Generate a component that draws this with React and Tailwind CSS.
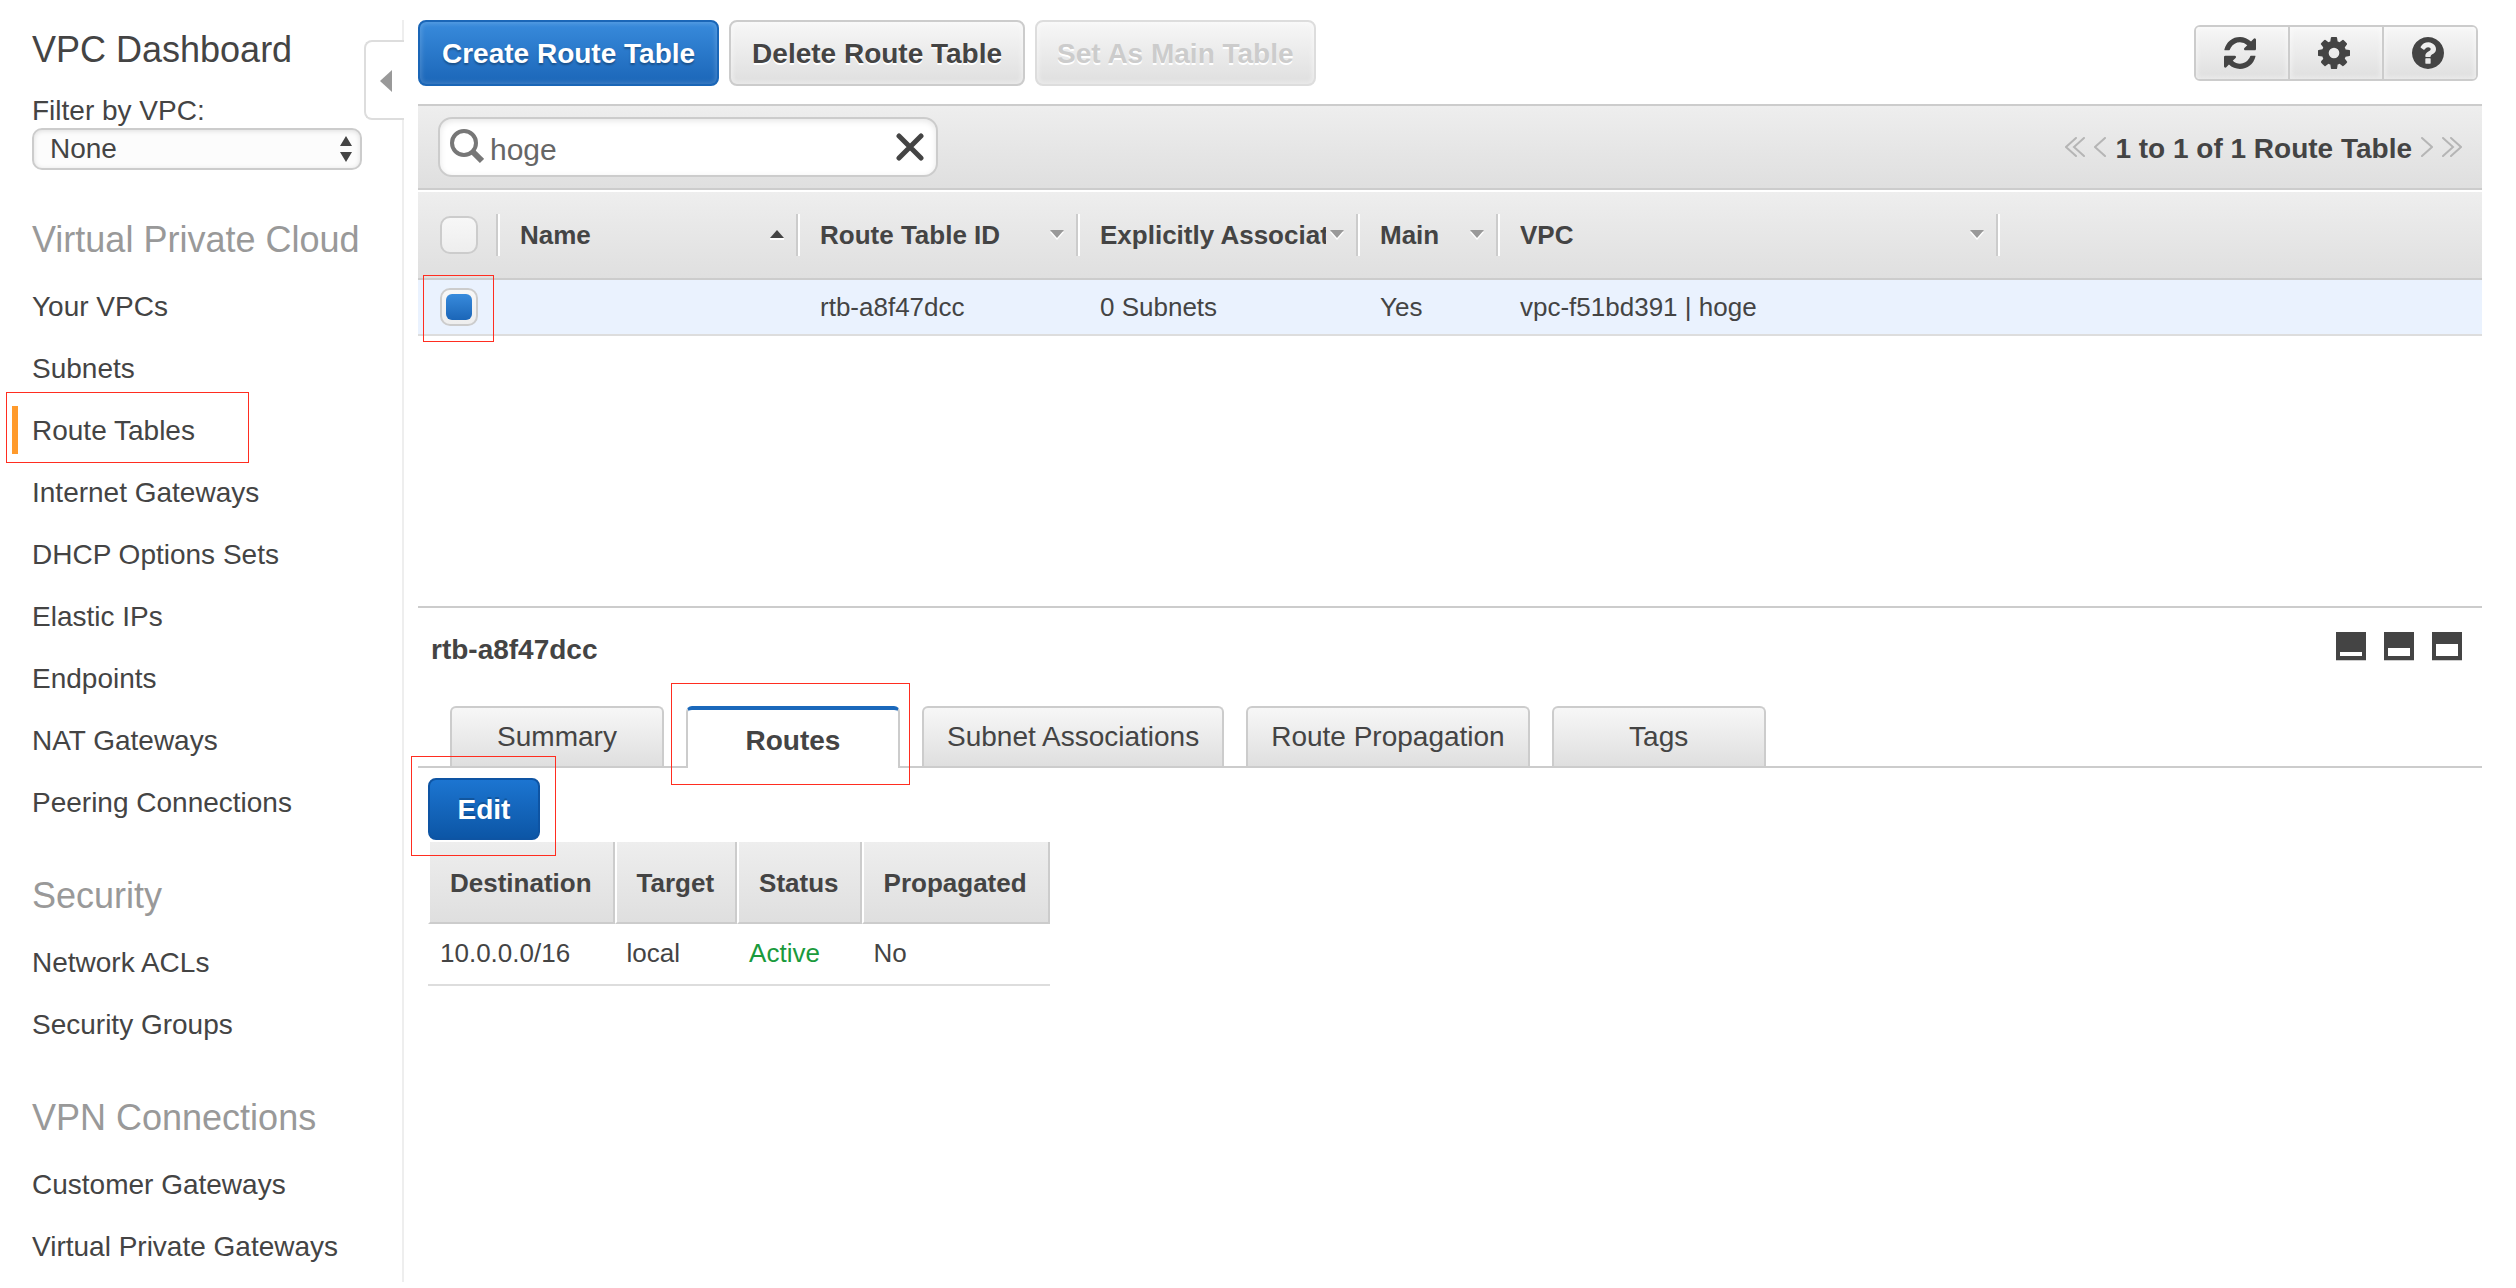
import React from 'react'

const NAV_SECTIONS = [
  {
    title: 'Virtual Private Cloud',
    items: [
      'Your VPCs',
      'Subnets',
      'Route Tables',
      'Internet Gateways',
      'DHCP Options Sets',
      'Elastic IPs',
      'Endpoints',
      'NAT Gateways',
      'Peering Connections'
    ]
  },
  { title: 'Security', items: ['Network ACLs', 'Security Groups'] },
  { title: 'VPN Connections', items: ['Customer Gateways', 'Virtual Private Gateways'] }
]

const COLUMNS = [
  { label: 'Name', width: 'w-[300px]', sort: 'up' },
  { label: 'Route Table ID', width: 'w-[280px]', sort: 'down' },
  { label: 'Explicitly Associat', width: 'w-[280px]', sort: 'down' },
  { label: 'Main', width: 'w-[140px]', sort: 'down' },
  { label: 'VPC', width: 'w-[500px]', sort: 'down' }
]

const ROUTE_TABLES = [['', 'rtb-a8f47dcc', '0 Subnets', 'Yes', 'vpc-f51bd391 | hoge']]

const TABS = ['Summary', 'Routes', 'Subnet Associations', 'Route Propagation', 'Tags']

const ROUTE_COLUMNS = ['Destination', 'Target', 'Status', 'Propagated']

// Shared looks
const BAR = 'bg-linear-to-b from-[#eeeeee] to-[#dfdfdf]'
const BUTTON = 'h-[66px] rounded-lg border-2 pt-0.5 text-[28px] leading-8 font-bold whitespace-nowrap'
const GREY_BUTTON = 'bg-linear-to-b from-[#f7f7f7] to-[#dfdfdf] [text-shadow:0_2px_0_#fff] shadow-[inset_0_0_4px_2px_rgba(255,255,255,0.4)]'
const ICON_BUTTON = 'flex items-center justify-center pr-1'
const HIGHLIGHT = 'pointer-events-none absolute z-10 border border-[#ff2d20]'

function RefreshIcon() {
  return (
    <svg viewBox="0 0 1536 1536" className="size-8 fill-current" aria-hidden="true">
      <path d="M1511 928q0 5-1 7-64 268-268 434.5t-478 166.5q-146 0-282.5-55t-243.5-157l-129 129q-19 19-45 19t-45-19-19-45v-448q0-26 19-45t45-19h448q26 0 45 19t19 45-19 45l-137 137q71 66 161 102t187 36q134 0 250-65t186-179q11-17 53-117 8-23 30-23h192q13 0 22.5 9.5t9.5 22.5zm25-800v448q0 26-19 45t-45 19h-448q-26 0-45-19t-19-45 19-45l138-138q-148-137-349-137-134 0-250 65t-186 179q-11 17-53 117-8 23-30 23h-199q-13 0-22.5-9.5t-9.5-22.5v-7q65-268 270-434.5t480-166.5q146 0 284 55.5t245 156.5l130-129q19-19 45-19t45 19 19 45z" />
    </svg>
  )
}

function CogIcon() {
  return (
    <svg viewBox="0 0 1536 1536" className="size-8 fill-current" aria-hidden="true">
      <path d="M1024 768q0-106-75-181t-181-75-181 75-75 181 75 181 181 75 181-75 75-181zm512-109v222q0 12-8 23t-20 13l-185 28q-19 54-39 91 35 50 107 138 10 12 10 25t-9 23q-27 37-99 108t-94 71q-12 0-26-9l-138-108q-44 23-91 38-16 136-29 186-7 28-36 28h-222q-14 0-24.5-8.5t-11.5-21.5l-28-184q-49-16-90-37l-141 107q-10 9-25 9-14 0-25-11-126-114-165-168-7-10-7-23 0-12 8-23 15-21 51-66.5t54-70.5q-27-50-41-99l-183-27q-13-2-21-12.5t-8-23.5v-222q0-12 8-23t19-13l186-28q14-46 39-92-40-57-107-138-10-12-10-24 0-10 9-23 26-36 98.5-107.5t94.5-71.5q13 0 26 10l138 107q44-23 91-38 16-136 29-186 7-28 36-28h222q14 0 24.5 8.5t11.5 21.5l28 184q49 16 90 37l142-107q9-9 24-9 13 0 25 10 129 119 165 170 7 8 7 22 0 12-8 23-15 21-51 66.5t-54 70.5q26 50 41 98l183 28q13 2 21 12.5t8 23.5z" />
    </svg>
  )
}

function HelpIcon() {
  return (
    <svg viewBox="0 0 1536 1536" className="size-8 fill-current" aria-hidden="true">
      <path d="M896 1248v-192q0-14-9-23t-23-9h-192q-14 0-23 9t-9 23v192q0 14 9 23t23 9h192q14 0 23-9t9-23zm256-672q0-88-55.5-163t-138.5-116-170-41q-243 0-371 213-15 24 8 42l132 100q7 6 19 6 16 0 25-12 53-68 86-92 34-24 86-24 48 0 85.5 26t37.5 59q0 38-20 61t-68 45q-63 28-115.5 86.5t-52.5 125.5v36q0 14 9 23t23 9h192q14 0 23-9t9-23q0-19 21.5-49.5t54.5-49.5q32-18 49-28.5t46-35 44.5-48 28-60.5 12.5-81zm384 192q0 209-103 385.5t-279.5 279.5-385.5 103-385.5-103-279.5-279.5-103-385.5 103-385.5 279.5-279.5 385.5-103 385.5 103 279.5 279.5 103 385.5z" />
    </svg>
  )
}

function SortArrow({ direction }) {
  if (direction === 'up') {
    return (
      <svg viewBox="0 0 14 10" className="h-[10px] w-[14px] shrink-0" aria-hidden="true">
        <path d="M0 8h14v2H0z" fill="#fff" />
        <path d="M7 0l7 8H0z" fill="#444" />
      </svg>
    )
  }
  return (
    <svg viewBox="0 0 14 10" className="h-[10px] w-[14px] shrink-0" aria-hidden="true">
      <path d="M0 2h14l-7 8z" fill="#fff" />
      <path d="M0 0h14l-7 8z" fill="#999" />
    </svg>
  )
}

function Separator() {
  return <span className="h-[42px] w-1 shrink-0 border-l-2 border-[#ccc] bg-white" />
}

function Checkbox({ label, defaultChecked }) {
  return (
    <input
      type="checkbox"
      aria-label={label}
      defaultChecked={defaultChecked}
      className="grid size-[38px] appearance-none place-items-center rounded-[10px] border-2 border-[#ccc] bg-linear-to-b from-[#f7f7f7] to-[#eeeeee] checked:before:size-[26px] checked:before:rounded-md checked:before:bg-linear-to-b checked:before:from-[#388bdc] checked:before:to-[#1b66b8] checked:before:content-['']"
    />
  )
}

function PagerButton({ label, double, flip }) {
  return (
    <button type="button" aria-label={label} className={flip ? 'rotate-180' : ''}>
      <svg
        viewBox={double ? '0 0 20 20' : '0 0 12 20'}
        className={double ? 'h-5 w-5' : 'h-5 w-3'}
        fill="none"
        stroke="#b5b5b5"
        strokeWidth="2"
        strokeLinecap="round"
        aria-hidden="true"
      >
        <path d="M11 1L1 10l10 9" />
        {double && <path d="M19 1L9 10l10 9" />}
      </svg>
    </button>
  )
}

// Panel size switch: the white slot grows with the detail pane
function PaneButton({ label, y, height }) {
  return (
    <button type="button" aria-label={label}>
      <svg viewBox="0 0 30 29" className="h-[29px] w-[30px]" aria-hidden="true">
        <path d="M0 27h30v2H0z" fill="#ccc" />
        <path d="M0 0h30v28H0z" fill="#444" />
        <rect x="4" y={y} width="22" height={height} fill="#fff" />
      </svg>
    </button>
  )
}

function Sidebar() {
  return (
    <aside className="relative w-[404px] shrink-0 pt-5 pb-[6px]">
      <div className="min-h-[1262px] border-r-2 border-[#eee] pt-[10px] pr-10 pl-8">
        <h1 className="mb-6 text-4xl leading-10">VPC Dashboard</h1>
        <label htmlFor="vpc-filter" className="block text-[28px] leading-[34px]">
          Filter by VPC:
        </label>
        <div className="relative">
          <select
            id="vpc-filter"
            className="block h-[42px] w-full appearance-none rounded-[10px] border-2 border-[#ccc] bg-[#fcfcfc] pl-4 text-[28px] leading-9 shadow-[inset_0_1px_5px_rgba(0,0,0,0.12)]"
          >
            <option>None</option>
          </select>
          <svg viewBox="0 0 12 26" className="pointer-events-none absolute top-2 right-[10px] h-[26px] w-3 fill-[#444]" aria-hidden="true">
            <path d="M6 0l6 10H0zM6 26l6-10H0z" />
          </svg>
        </div>
        <nav className="mt-10 flex flex-col gap-8">
          {NAV_SECTIONS.map((section) => (
            <section key={section.title}>
              <h2 className="mb-[6px] text-4xl leading-[60px] whitespace-nowrap text-[#999]">{section.title}</h2>
              <ul>
                {section.items.map((item) => (
                  <li key={item} className="relative text-[28px] leading-[62px] whitespace-nowrap">
                    {item === 'Route Tables' && (
                      <>
                        <span className="absolute top-[6px] -left-5 h-12 w-[6px] bg-[#ff9a2b]" />
                        <span className={`${HIGHLIGHT} -top-2 -left-[26px] h-[71px] w-[243px]`} />
                      </>
                    )}
                    <a href="#">{item}</a>
                  </li>
                ))}
              </ul>
            </section>
          ))}
        </nav>
      </div>
      <button
        type="button"
        aria-label="Collapse navigation"
        className="absolute top-10 right-0 flex h-20 w-10 items-center rounded-l-lg border-2 border-r-0 border-[#ddd] bg-white pt-0.5 pl-[14px]"
      >
        <svg viewBox="0 0 12 22" className="h-[22px] w-3 fill-[#999]" aria-hidden="true">
          <path d="M12 0v22L0 11z" />
        </svg>
      </button>
    </aside>
  )
}

function Toolbar() {
  return (
    <div className="mb-[18px] flex items-center justify-between pr-1">
      <div className="flex gap-[10px]">
        <button
          type="button"
          className={`${BUTTON} border-[#1a66b7] bg-linear-to-b from-[#388bdc] to-[#1b66b8] px-[22px] text-white shadow-[inset_0_0_4px_2px_rgba(255,255,255,0.15)] [text-shadow:0_2px_2px_rgba(0,0,0,0.3)]`}
        >
          Create Route Table
        </button>
        <button type="button" className={`${BUTTON} ${GREY_BUTTON} border-[#ccc] px-[21px]`}>
          Delete Route Table
        </button>
        <button type="button" disabled className={`${BUTTON} ${GREY_BUTTON} border-[#ddd] px-5 text-[#ccc]`}>
          Set As Main Table
        </button>
      </div>
      <div className="flex h-14 divide-x-2 divide-[#ccc] overflow-hidden rounded-md border-2 border-[#ccc]">
        <button type="button" aria-label="Refresh" className={`${GREY_BUTTON} ${ICON_BUTTON} w-[94px]`}>
          <RefreshIcon />
        </button>
        <button type="button" aria-label="Settings" className={`${GREY_BUTTON} ${ICON_BUTTON} w-[94px]`}>
          <CogIcon />
        </button>
        <button type="button" aria-label="Help" className={`${GREY_BUTTON} ${ICON_BUTTON} w-[92px]`}>
          <HelpIcon />
        </button>
      </div>
    </div>
  )
}

function FilterBar() {
  return (
    <div className={`${BAR} flex h-[86px] items-center justify-between border-y-2 border-[#ccc] px-5`}>
      <div className="flex h-15 w-[500px] items-center rounded-[14px] border-2 border-[#ccc] bg-white pr-3 pl-[10px] shadow-[inset_0_2px_6px_rgba(0,0,0,0.1)]">
        <svg viewBox="0 0 34 36" className="h-9 w-[34px] shrink-0" fill="none" stroke="#777" aria-hidden="true">
          <circle cx="14" cy="14" r="12" strokeWidth="4" />
          <path d="M22 22l10 10" strokeWidth="6" />
        </svg>
        <input
          type="text"
          aria-label="Search route tables"
          defaultValue="hoge"
          className="min-w-0 flex-1 bg-transparent pt-[6px] pl-[6px] text-3xl leading-9 text-[#666] outline-none"
        />
        <button type="button" aria-label="Clear search">
          <svg viewBox="0 0 28 28" className="size-7" stroke="#444" strokeWidth="5" strokeLinecap="round" aria-hidden="true">
            <path d="M3 3l22 22M25 3L3 25" />
          </svg>
        </button>
      </div>
      <div className="flex items-center gap-[9px]">
        <PagerButton label="First page" double />
        <PagerButton label="Previous page" />
        <span className="pt-[3px] text-[28px] leading-9 font-bold">1 to 1 of 1 Route Table</span>
        <PagerButton label="Next page" flip />
        <PagerButton label="Last page" double flip />
      </div>
    </div>
  )
}

function RouteTableList() {
  return (
    <div className="min-h-[416px] border-t-2 border-white">
      <table className="w-full table-fixed border-separate border-spacing-0 text-left text-[26px] leading-[30px]">
        <thead>
          <tr className={BAR}>
            <th className="w-[82px] border-b-2 border-[#ccc] p-0">
              <div className="flex h-[86px] items-center justify-between pl-[22px]">
                <Checkbox label="Select all" />
                <Separator />
              </div>
            </th>
            {COLUMNS.map((col) => (
              <th key={col.label} className={`${col.width} border-b-2 border-[#ccc] p-0`}>
                <div className="flex h-[86px] items-center pl-5">
                  <span className="mr-1 min-w-0 flex-1 overflow-hidden whitespace-nowrap">{col.label}</span>
                  <SortArrow direction={col.sort} />
                  <span className="w-3 shrink-0" />
                  <Separator />
                </div>
              </th>
            ))}
            <td className="border-b-2 border-[#ccc] p-0" />
          </tr>
        </thead>
        <tbody>
          {ROUTE_TABLES.map((row) => (
            <tr key={row[1]} className="bg-[#eaf2fe]">
              <td className="h-14 border-b-2 border-[#ddd] p-0">
                <div className="relative pl-[22px]">
                  <Checkbox label={`Select ${row[1]}`} defaultChecked />
                  <span className={`${HIGHLIGHT} -top-[13px] left-[5px] h-[67px] w-[71px]`} />
                </div>
              </td>
              {row.map((cell, i) => (
                <td key={i} className="border-b-2 border-[#ddd] p-0 pl-5">
                  {cell}
                </td>
              ))}
              <td className="border-b-2 border-[#ddd] p-0" />
            </tr>
          ))}
        </tbody>
      </table>
    </div>
  )
}

function Tabs() {
  return (
    <div role="tablist" className="flex items-end gap-[22px] border-b-2 border-[#ccc] pl-8">
      {TABS.map((tab) =>
        tab === 'Routes' ? (
          <div key={tab} className="relative -mb-[2px]">
            <button
              type="button"
              role="tab"
              aria-selected="true"
              className="block h-[62px] min-w-[214px] rounded-t-md border-x-2 border-t-4 border-x-[#ccc] border-t-[#1a68bb] bg-white px-[23px] pt-1 text-[28px] leading-8 font-bold"
            >
              {tab}
            </button>
            <span className={`${HIGHLIGHT} -top-[23px] -left-[15px] h-[102px] w-[239px]`} />
          </div>
        ) : (
          <button
            key={tab}
            type="button"
            role="tab"
            aria-selected="false"
            className="h-15 min-w-[214px] rounded-t-md border-2 border-b-0 border-[#ccc] bg-linear-to-b from-[#f7f7f7] to-[#dfdfdf] px-[23px] text-[28px] leading-8"
          >
            {tab}
          </button>
        )
      )}
    </div>
  )
}

function RoutesPanel() {
  return (
    <div className="pt-[10px] pl-[10px]">
      <div className="relative mb-[2px] w-fit">
        <button
          type="button"
          className="block h-[62px] w-28 rounded-lg border-2 border-[#0e54a3] bg-linear-to-b from-[#1c75d1] to-[#0c56a6] pt-0.5 text-[28px] leading-8 font-bold text-white [text-shadow:0_-2px_0_rgba(0,0,0,0.2)]"
        >
          Edit
        </button>
        <span className={`${HIGHLIGHT} -top-[22px] -left-[17px] h-[100px] w-[145px]`} />
      </div>
      <table className="border-separate border-spacing-0 text-left text-[26px] leading-[30px]">
        <thead>
          <tr>
            {ROUTE_COLUMNS.map((col) => (
              <th
                key={col}
                className={`${BAR} h-[82px] border-r-2 border-b-2 border-l-2 border-r-[#ccc] border-b-[#ccc] border-l-white pt-0.5 pr-[21px] pl-5`}
              >
                {col}
              </th>
            ))}
          </tr>
        </thead>
        <tbody>
          <tr>
            <td className="h-[62px] border-b-2 border-[#ddd] pb-0.5 pl-3">10.0.0.0/16</td>
            <td className="border-b-2 border-[#ddd] pb-0.5 pl-3">local</td>
            <td className="border-b-2 border-[#ddd] pb-0.5 pl-3 text-[#1a9a3c]">Active</td>
            <td className="border-b-2 border-[#ddd] pb-0.5 pl-3">No</td>
          </tr>
        </tbody>
      </table>
    </div>
  )
}

export default function App() {
  return (
    <div className="flex min-h-screen bg-white font-['Liberation_Sans',Arial,sans-serif] text-[#444]">
      <Sidebar />
      <main className="min-w-0 flex-1 pt-5 pr-[34px] pl-[14px]">
        <Toolbar />
        <FilterBar />
        <RouteTableList />
        <section className="border-t-2 border-[#ccc]">
          <div className="flex h-[98px] items-start justify-between pt-6 pr-5 pl-[13px]">
            <h2 className="text-[28px] leading-9 font-bold">rtb-a8f47dcc</h2>
            <div className="flex gap-[18px]">
              <PaneButton label="Minimize details" y="20" height="4" />
              <PaneButton label="Split view" y="16" height="8" />
              <PaneButton label="Maximize details" y="12" height="12" />
            </div>
          </div>
          <Tabs />
          <RoutesPanel />
        </section>
      </main>
    </div>
  )
}
